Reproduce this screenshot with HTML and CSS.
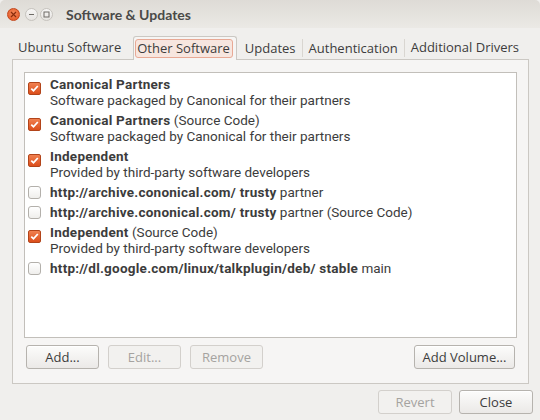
FILE: index.html
```html
<!DOCTYPE html>
<html>
<head>
<meta charset="utf-8">
<link rel="stylesheet" href="styles.css">
</head>
<body>
<div class="window">
  <header class="titlebar">
    <span class="ctl close"><svg width="7" height="7" viewBox="0 0 7 7"><path d="M1 1L6 6M6 1L1 6" stroke="#8a2c0c" stroke-width="1.2"/></svg></span>
    <span class="ctl"><svg width="7" height="7" viewBox="0 0 7 7"><path d="M1 3.5H6" stroke="#6e6b66" stroke-width="1"/></svg></span>
    <span class="ctl"><svg width="7" height="7" viewBox="0 0 7 7"><rect x="1" y="1" width="5" height="5" fill="none" stroke="#6e6b66" stroke-width="1"/></svg></span>
    <span class="title">Software &amp; Updates</span>
  </header>
  <main class="content">
    <nav class="tabs">
      <span class="tab first">Ubuntu Software</span>
      <span class="tab active"><span class="focus">Other Software</span></span>
      <span class="tab sep">Updates</span>
      <span class="tab sep">Authentication</span>
      <span class="tab">Additional Drivers</span>
    </nav>
    <section class="notebook">
      <ul class="list">
        <li class="row two"><span class="check on"></span><div><div><b>Canonical Partners</b></div><div>Software packaged by Canonical for their partners</div></div></li>
        <li class="row two"><span class="check on"></span><div><div><b>Canonical Partners</b> (Source Code)</div><div>Software packaged by Canonical for their partners</div></div></li>
        <li class="row two"><span class="check on"></span><div><div><b>Independent</b></div><div>Provided by third-party software developers</div></div></li>
        <li class="row"><span class="check"></span><div><b>http://archive.cononical.com/ trusty</b> partner</div></li>
        <li class="row"><span class="check"></span><div><b>http://archive.cononical.com/ trusty</b> partner (Source Code)</div></li>
        <li class="row two"><span class="check on"></span><div><div><b>Independent</b> (Source Code)</div><div>Provided by third-party software developers</div></div></li>
        <li class="row"><span class="check"></span><div><b>http://dl.google.com/linux/talkplugin/deb/ stable</b> main</div></li>
      </ul>
      <div class="btnrow">
        <button class="btn">Add...</button>
        <button class="btn" disabled>Edit...</button>
        <button class="btn" disabled>Remove</button>
        <span class="spacer"></span>
        <button class="btn wide">Add Volume...</button>
      </div>
    </section>
  </main>
  <footer class="actions">
    <button class="btn" disabled>Revert</button>
    <button class="btn">Close</button>
  </footer>
</div>
</body>
</html>
```
FILE: styles.css
```css
* { box-sizing: border-box; }
html, body { margin: 0; }
body {
  width: 540px;
  height: 420px;
  overflow: hidden;
  background: #f0efed;
  font-family: "Open Sans", "DejaVu Sans", sans-serif;
  font-size: 13px;
  color: #3c3c3c;
  white-space: nowrap;
}
.titlebar {
  height: 28px;
  display: flex;
  align-items: center;
  padding: 1px 0 0 7px;
  background: linear-gradient(#dedbd6, #ebe9e5);
  border-radius: 5px 5px 0 0;
}
.ctl {
  width: 13px;
  height: 13px;
  border-radius: 50%;
  border: 1px solid #c6c3be;
  background: linear-gradient(#f7f6f5, #e6e4e1);
  display: flex;
  align-items: center;
  justify-content: center;
  margin-right: 2px;
}
.ctl.close {
  margin-right: 5px;
  border-color: #c4461b;
  background: radial-gradient(circle at 50% 40%, #f58a5c, #e0501c);
}
.title {
  margin-left: 11px;
  font-family: "Lato", "Open Sans", sans-serif;
  font-weight: bold;
  font-size: 14px;
  color: #4a4a48;
}
.content {
  padding: 0 11px 0 12px;
}
.tabs {
  display: flex;
  align-items: flex-end;
  height: 32px;
  padding-top: 9px;
  margin-bottom: -1px;
  position: relative;
  z-index: 1;
}
.tab {
  height: 22px;
  line-height: 20px;
  padding: 0 6px;
  margin-bottom: 1px;
}
.tab.first { margin-right: 6px; }
.tab.sep {
  border-right: 1px solid #d9d6d1;
  height: 18px;
  line-height: 18px;
  margin-bottom: 3px;
}
.tab.active {
  height: 24px;
  margin: 0 2px 0 0;
  padding: 2px 3px 0 1px;
  border: 1px solid #cbc8c3;
  border-bottom: none;
  border-radius: 3px 3px 0 0;
  background: #f6f5f4;
  line-height: 17px;
}
.focus {
  display: block;
  padding: 0 2px 0 1px;
  border: 1px solid #e8a995;
  border-radius: 3px;
  background: #f7e6df;
}
.notebook {
  border: 1px solid #cbc8c3;
  background: #f6f5f4;
  height: 325px;
  padding: 12px 11px 13px 11px;
  display: flex;
  flex-direction: column;
}
.list {
  list-style: none;
  margin: 0;
  padding: 1px 0 0 3px;
  background: #fff;
  border: 1px solid #c2bfba;
  height: 266px;
  font-family: "Roboto", "Open Sans", sans-serif;
  font-size: 13.5px;
}
.row {
  display: flex;
  align-items: center;
  gap: 9px;
  padding: 2px 0;
  line-height: 16px;
  height: 20px;
}
.row.two {
  height: 36px;
  align-items: flex-start;
}
.row.two .check { margin-top: 6px; }
.row b { font-weight: bold; letter-spacing: 0.25px; }
.check {
  flex: none;
  width: 13px;
  height: 13px;
  border: 1px solid #b3b0ab;
  border-radius: 3px;
  background: linear-gradient(#ffffff, #efeeec);
}
.check.on {
  border-color: #b2441a;
  border-radius: 2px;
  background:
    url("data:image/svg+xml,%3Csvg xmlns='http://www.w3.org/2000/svg' width='11' height='11' viewBox='0 0 11 11'%3E%3Cpath d='M2.3 5.6L4.5 7.8L8.8 3' fill='none' stroke='white' stroke-width='1.8'/%3E%3C/svg%3E") center/11px 11px no-repeat,
    linear-gradient(#f08050, #dc4e1b);
}
.btnrow {
  display: flex;
  gap: 9px;
  margin-top: 7px;
  padding: 0 2px 0 2px;
}
.spacer { flex: 1; }
.btn {
  font-family: inherit;
  font-size: 13px;
  color: #3c3c3c;
  height: 24px;
  min-width: 73px;
  padding: 0 6px;
  border: 1px solid #b6b3ae;
  border-radius: 3px;
  background: linear-gradient(#fcfcfb, #ebe9e7);
  box-shadow: inset 0 1px 0 #fff;
  white-space: nowrap;
}
.btn.wide { width: 101px; }
.btn:disabled {
  color: #a5a3a0;
  border-color: #d3d0cc;
  background: #f2f1ef;
  box-shadow: none;
}
.actions {
  display: flex;
  justify-content: flex-end;
  gap: 7px;
  padding: 6px 7px 0 0;
}
.actions .btn { width: 74px; }
```
